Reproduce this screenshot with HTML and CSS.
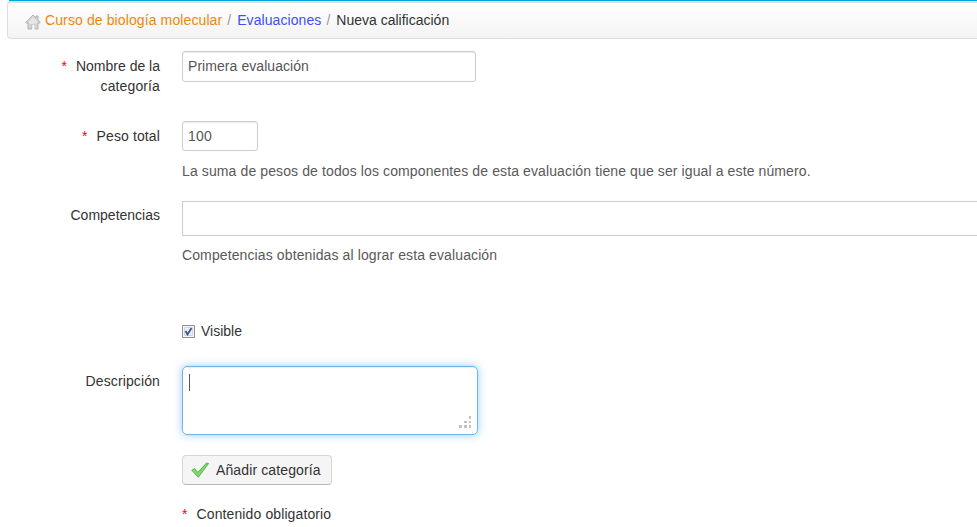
FILE: index.html
```html
<!DOCTYPE html>
<html lang="es">
<head>
<meta charset="utf-8">
<title>Nueva calificación</title>
<link rel="stylesheet" href="styles.css">
</head>
<body>
<header class="topline"></header>
<nav class="breadcrumb">
  <svg class="home" viewBox="0 0 16 16"><path d="M8 1 .8 8.300 2 9.200h1V15h4v-4.500h2.500V15H13V9.200h1l1.200-.9L13 6V2h-2v2z" fill="#d6d6d6" stroke="#adadad" stroke-width=".9"/><path d="M8 3.500 4.300 7v3H8V9.500h4V7z" fill="#e6e6e6"/><path d="M7.500 10.500h2V15h-2z" fill="#fff"/></svg>
  <a class="course">Curso de biología molecular</a><span class="sep">/</span><a class="section">Evaluaciones</a><span class="sep">/</span><span class="current">Nueva calificación</span>
</nav>
<form class="form">
  <div class="row name-row"><label class="label"><span class="req">*</span>Nombre de la <span class="wide">categoría</span></label><div class="field"><input class="text name" value="Primera evaluación"></div></div>
  <div class="row weight-row"><label class="label"><span class="req">*</span><span class="wide">Peso total</span></label><div class="field"><input class="text weight" value="100"><p class="help">La suma de pesos de todos los componentes de esta evaluación tiene que ser igual a este número.</p></div></div>
  <div class="row skills-row"><label class="label">Competencias</label><div class="field"><div class="skills"></div><p class="help">Competencias obtenidas al lograr esta evaluación</p></div></div>
  <div class="row visible-row"><span class="label"></span><div class="field check"><svg class="box" viewBox="0 0 13 13"><path d="M.5.5h12v12H.5z" fill="#f7f7f7" stroke="#8e8f8f"/><path d="M2.500 2.500h8v8h-8z" fill="#eceef0" stroke="#d3d7db"/><path d="m3.500 6 2 3.500 4-6.500" fill="none" stroke="#40589c" stroke-width="1.900"/></svg>Visible</div></div>
  <div class="row desc-row"><label class="label wide">Descripción</label><div class="field"><div class="area"><span class="caret"></span><svg class="grip" viewBox="0 0 13 13"><path d="M10 0h2v3h-2zM5 5h3v2H5zM10 5h2v2h-2zM0 9h3v3H0zM5 9h3v3H5zM10 9h2v3h-2z" fill="#c2c2c2"/></svg></div></div></div>
  <div class="row button-row"><span class="label"></span><div class="field"><button type="button" class="btn"><svg class="tick" viewBox="0 0 18 16"><path d="M.8 8.300 3.500 6.500 6.800 10.500 15.500 1l2 .5L7.300 15.200z" fill="#7ede62" stroke="#4da548" stroke-width=".9"/></svg>Añadir categoría</button></div></div>
  <div class="row"><span class="label"></span><div class="field note"><span class="req">*</span>Contenido obligatorio</div></div>
</form>
</body>
</html>
```
FILE: styles.css
```css
* { box-sizing: border-box; }
body { margin: 0; overflow: hidden; background: #fff; color: #333; font: 14px/20px "Liberation Sans", Arial, sans-serif; }
p { margin: 0; }
.topline { height: 1px; margin-left: 9px; background: #00a3df; }
.breadcrumb { display: flex; align-items: center; height: 38px; margin-left: 7px; padding: 0 0 2px 17px; border: 1px solid #ddd; border-width: 2px 0 1px 1px; border-top-color: #dedede; border-radius: 4px 0 0 4px; background: linear-gradient(#fff, #f3f3f3); }
.home { width: 16px; height: 16px; margin: 5px 4px 0 0; }
.course { color: #f0860a; letter-spacing: .11px; }
.section { color: #3c50f5; letter-spacing: .08px; }
.sep { padding: 0 6px 0 5px; color: #999; }
.form { padding-top: 12px; }
.row { display: flex; }
.label { flex: none; width: 160px; padding: 5px 0 0 60px; margin-right: 22px; text-align: right; }
.wide { letter-spacing: .12px; }
.req { margin-right: 9px; color: #f00; }
.field { flex: 1; }
.text { display: block; padding: 4px 5px; border: 1px solid #ccc; border-radius: 3px; box-shadow: inset 0 1px 1px rgba(0,0,0,.075); color: #555; font: inherit; outline: 0; }
.name { width: 294px; height: 31px; padding-bottom: 6px; letter-spacing: .06px; }
.weight { width: 76px; height: 30px; letter-spacing: .2px; }
.help { margin-top: 10px; color: #595959; letter-spacing: .113px; }
.name-row { height: 70px; }
.weight-row { height: 80px; }
.skills-row { height: 120px; }
.skills-row .label { padding-top: 4px; }
.skills { height: 35px; border: 1px solid #ccc; border-right: 0; }
.skills-row .help { margin-top: 9px; }
.visible-row { height: 45px; }
.check { display: flex; align-items: center; height: 20px; }
.box { width: 13px; height: 13px; margin-right: 6px; }
.desc-row { height: 89px; }
.area { position: relative; width: 296px; height: 69px; padding: 7px 6px; border: 1px solid #6db5ea; border-radius: 5px; box-shadow: inset 0 1px 1px rgba(0,0,0,.075), 0 0 8px rgba(82,168,236,.6); }
.caret { display: block; width: 1px; height: 17px; background: #555; }
.grip { position: absolute; right: 5px; bottom: 5px; width: 13px; height: 13px; }
.button-row { height: 49px; }
.btn { display: flex; align-items: center; width: 150px; height: 30px; padding: 0 8px; border: 1px solid #d5d5d5; border-bottom-color: #b8b8b8; border-radius: 4px; background: #f5f5f5; color: #333; font: inherit; letter-spacing: .12px; white-space: nowrap; }
.tick { flex: none; width: 18px; height: 16px; margin-right: 7px; }
.note { letter-spacing: .11px; }
```
